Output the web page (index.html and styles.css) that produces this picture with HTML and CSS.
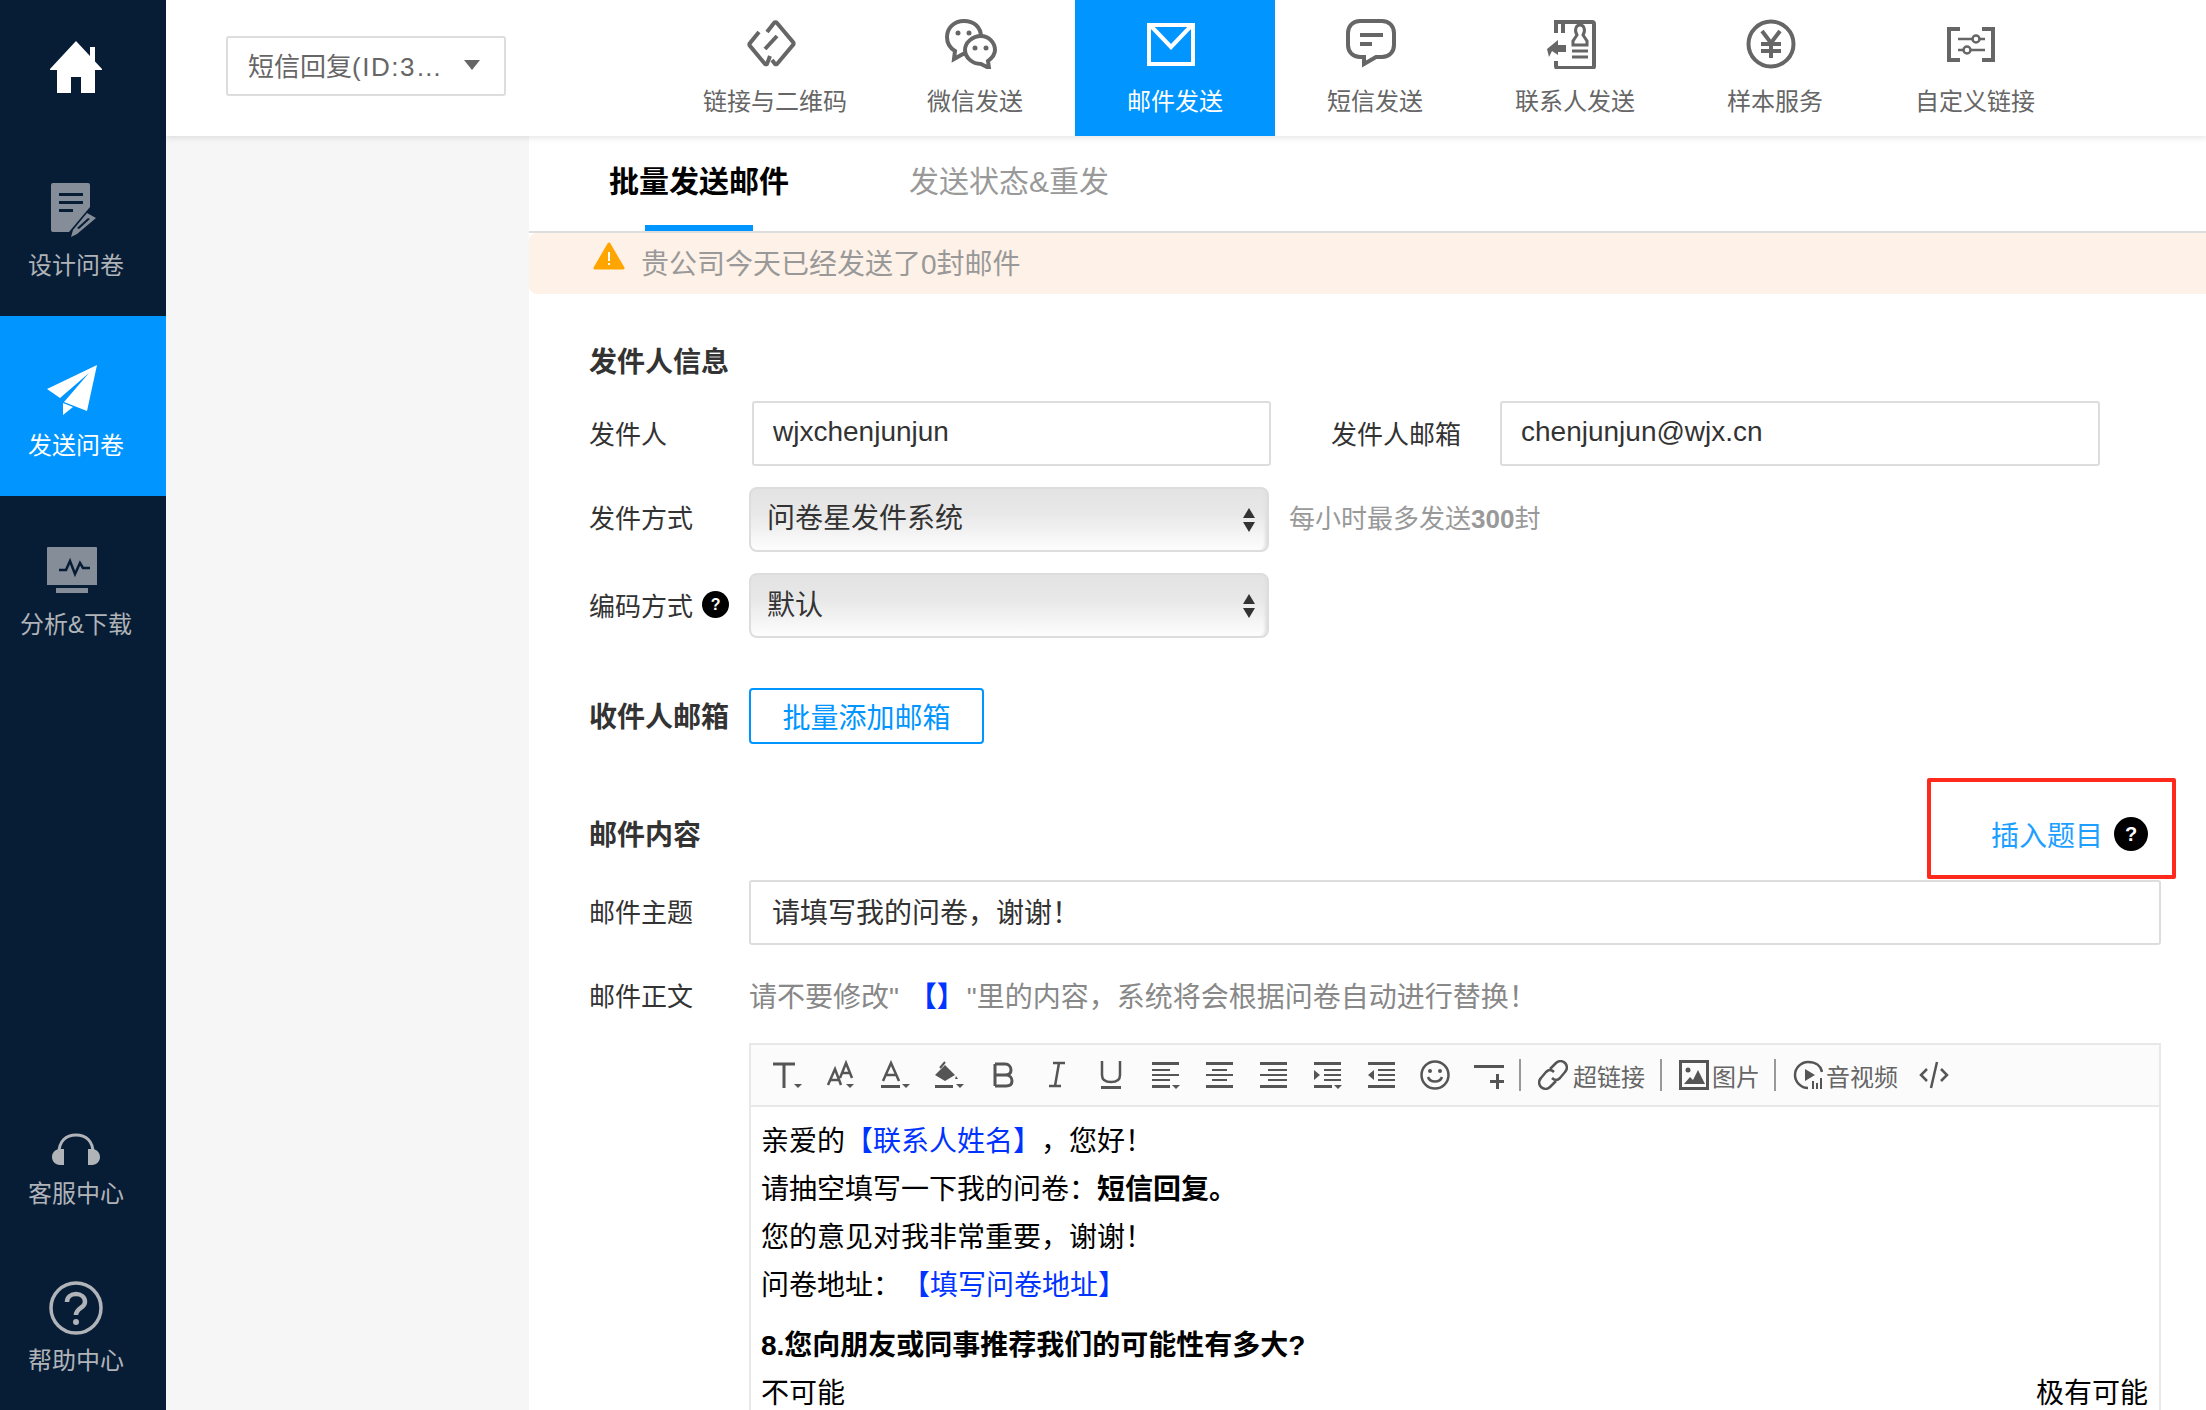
FILE: index.html
```html
<!DOCTYPE html>
<html lang="zh-CN">
<head>
    <meta charset="UTF-8">
    <title>邮件发送</title>
    <link rel="stylesheet" href="styles.css">
</head>
<body>
<div class="app">

    <aside class="sidebar">
        <div class="side-home">
            <svg width="52" height="52" viewBox="0 0 52 52"><path fill="#fff" d="M26 0 40 15V6h5v14.500L52 28v1H45V52H31V36H21V52H7V29H0v-1z"/></svg>
        </div>
        <div class="side-item side-design">
            <svg width="46" height="54" viewBox="0 0 46 54"><path fill="#858d98" d="M2 0H37a2 2 0 0 1 2 2V24L18 49H2a2 2 0 0 1-2-2V2a2 2 0 0 1 2-2z"/><path fill="#071d36" d="M8 10H32V13H8zM8 18H32V21H8zM8 26H22V29H8z"/><path fill="#858d98" d="M36 30 45 35 26 51 20 54 22 47z"/><path fill="#071d36" d="M37 35 39 36 28 46 26 45z"/></svg>
            <span>设计问卷</span>
        </div>
        <div class="side-item side-send">
            <svg width="50" height="50" viewBox="0 0 50 50"><path fill="#fff" d="M50 0 0 24 13 33 42 8 17 37 40 46zM16 38V50L26 42z"/></svg>
            <span>发送问卷</span>
        </div>
        <div class="side-item side-analysis">
            <svg width="50" height="46" viewBox="0 0 50 46"><path fill="#858d98" d="M1 0H49a1 1 0 0 1 1 1V38H0V1a1 1 0 0 1 1-1zM9 41H41V46H9z"/><path fill="none" stroke="#071d36" stroke-width="2.500" d="M12 23H19L23 14 28 27 33 16 36 21H43"/></svg>
            <span>分析&amp;下载</span>
        </div>
        <div class="side-fill"></div>
        <div class="side-item side-service">
            <svg width="48" height="33" viewBox="0 0 48 33"><path fill="none" stroke="#b0b3b8" stroke-width="3" d="M7 20C7 8 14 2 24 2S41 8 41 20"/><path fill="#b0b3b8" d="M12 16V32H8C3 32 0 28 0 24S3 16 8 16zM36 16V32H40C45 32 48 28 48 24S45 16 40 16z"/></svg>
            <span>客服中心</span>
        </div>
        <div class="side-item side-help">
            <svg width="54" height="54" viewBox="0 0 54 54"><circle cx="27" cy="27" r="25" fill="none" stroke="#b0b3b8" stroke-width="3.500"/><path fill="none" stroke="#b0b3b8" stroke-width="4.500" d="M18 21c0-5 4-8 9-8s9 3 9 8c0 6-9 6-9 13"/><circle cx="27" cy="41" r="3" fill="#b0b3b8"/></svg>
            <span>帮助中心</span>
        </div>
    </aside>

    <div class="main">
        <header class="topbar">
            <div class="survey-pick">
                <span>短信回复<span class="survey-id">(ID:3…</span></span>
                <i class="caret"></i>
            </div>
            <nav class="nav">
                <div class="nav-item">
                    <svg width="50" height="50" viewBox="0 0 50 50"><g fill="none" stroke="#666" stroke-width="4"><path d="M21 13 28 4a2 2 0 0 1 3 0L47 23a2 2 0 0 1 0 3L31 45a2 2 0 0 1-2 0L26 41"/><path d="M24 37 21 45a2 2 0 0 1-2 0L4 27a2 2 0 0 1 0-3L13 13"/><path d="M19 30 31 17"/></g></svg>
                    <span>链接与二维码</span>
                </div>
                <div class="nav-item">
                    <svg width="52" height="50" viewBox="0 0 52 50"><g fill="#fff" stroke="#666" stroke-width="4"><path d="M19 2C9 2 2 9 2 18c0 6 3 11 8 14l-1 8 9-5c8 0 18-7 18-17S29 2 19 2z"/><path d="M36 17C27 17 20 24 20 31s7 14 16 14l8 4-1-7c4-3 7-7 7-11 0-7-6-14-14-14z"/></g><g fill="#666"><circle cx="13" cy="14" r="2.500"/><circle cx="24" cy="14" r="2.500"/><circle cx="30" cy="29" r="2.500"/><circle cx="41" cy="29" r="2.500"/></g></svg>
                    <span>微信发送</span>
                </div>
                <div class="nav-item active">
                    <svg width="50" height="50" viewBox="0 0 50 50"><path fill="none" stroke="#fff" stroke-width="4" d="M3 6H47V45H3zM5 7 25 28 45 7"/></svg>
                    <span>邮件发送</span>
                </div>
                <div class="nav-item">
                    <svg width="50" height="50" viewBox="0 0 50 50"><path fill="none" stroke="#666" stroke-width="4" d="M14 2H36C43 2 48 7 48 14V26C48 33 43 38 36 38H30L18 45V38H14C7 38 2 33 2 26V14C2 7 7 2 14 2z"/><path fill="#666" d="M14 14H37V18H14zM14 23H26V27H14z"/></svg>
                    <span>短信发送</span>
                </div>
                <div class="nav-item">
                    <svg width="50" height="50" viewBox="0 0 50 50"><path fill="none" stroke="#666" stroke-width="4" d="M10 14V3H46a2 2 0 0 1 2 2V47a2 2 0 0 1-2 2H12a2 2 0 0 1-2-2V42"/><path fill="#666" d="M15 1H19V14H15zM1 30 12 21V26H20V33H12V36L6 32 3 38z"/><path fill="none" stroke="#666" stroke-width="3" d="M27 26V22L31 16C28 11 30 6 34 6S40 11 37 16L41 22V26zM26 32H42M26 38H42"/></svg>
                    <span>联系人发送</span>
                </div>
                <div class="nav-item">
                    <svg width="50" height="50" viewBox="0 0 50 50"><circle cx="25" cy="25" r="22.500" fill="none" stroke="#666" stroke-width="4"/><path fill="none" stroke="#666" stroke-width="4" d="M16 12 25 24 34 12M25 24V39M15 25H35M15 32H35"/></svg>
                    <span>样本服务</span>
                </div>
                <div class="nav-item">
                    <svg width="50" height="50" viewBox="0 0 50 50"><g fill="none" stroke="#666" stroke-width="4"><path d="M14 10H3V41H14M36 10H47V41H36"/></g><g fill="none" stroke="#666" stroke-width="2.500"><path d="M12 20H39M12 31H39"/><circle cx="30" cy="20" r="3.500" fill="#fff"/><circle cx="21" cy="31" r="3.500" fill="#fff"/></g></svg>
                    <span>自定义链接</span>
                </div>
            </nav>
        </header>

        <div class="content">
            <div class="gutter"></div>
            <section class="panel">
                <div class="tabs">
                    <div class="tab current">批量发送邮件</div>
                    <div class="tab">发送状态&amp;重发</div>
                </div>
                <div class="alert">
                    <svg width="32" height="28" viewBox="0 0 32 28"><path fill="#ffa500" stroke="#ffa500" stroke-width="3" stroke-linejoin="round" d="M16 2 30 26H2z"/><path fill="#fff" d="M15 10H17V19H15zM15 21H17V23H15z"/></svg>
                    <span>贵公司今天已经发送了0封邮件</span>
                </div>

                <form class="form">
                    <h3 class="sec-title first">发件人信息</h3>
                    <div class="row">
                        <label class="lbl">发件人</label>
                        <input class="field sender" type="text" value="wjxchenjunjun">
                        <label class="lbl lbl-mail">发件人邮箱</label>
                        <input class="field mail" type="text" value="chenjunjun@wjx.cn">
                    </div>
                    <div class="row">
                        <label class="lbl lbl-way">发件方式</label>
                        <div class="pick"><span class="way">问卷星发件系统</span></div>
                        <span class="hint">每小时最多发送<b>300</b>封</span>
                    </div>
                    <div class="row">
                        <label class="lbl">编码方式<i class="qmark small">?</i></label>
                        <div class="pick"><span class="up">默认</span></div>
                    </div>
                    <div class="row recv">
                        <label class="lbl strong">收件人邮箱</label>
                        <div class="btn-line">批量添加邮箱</div>
                    </div>
                    <div class="row-head">
                        <h3 class="sec-title">邮件内容</h3>
                        <div class="insert">
                            <a>插入题目</a><i class="qmark">?</i>
                            <div class="mark"></div>
                        </div>
                    </div>
                    <div class="row subject">
                        <label class="lbl">邮件主题</label>
                        <input class="field full" type="text" value="请填写我的问卷，谢谢！">
                    </div>
                    <div class="row body-tip">
                        <label class="lbl">邮件正文</label>
                        <span class="tip">请不要修改" <b>【】</b>"里的内容，系统将会根据问卷自动进行替换！</span>
                    </div>

                    <div class="editor">
                        <div class="toolbar">
                            <div class="tb-btn"><svg width="30" height="30" viewBox="0 0 30 30"><path fill="none" stroke="#555" stroke-width="3" d="M1 4H23M12 4V28"/><path fill="#555" d="M22 24H30L26 28z"/></svg></div>
                            <div class="tb-btn"><svg width="30" height="30" viewBox="0 0 30 30"><g fill="none" stroke="#555" stroke-width="2.500"><path d="M2 25 9 9 15 25M4 20H14M14 18 20 3 26 18M16 13H24"/></g><path fill="#555" d="M20 24H28L24 28z"/></svg></div>
                            <div class="tb-btn"><svg width="30" height="30" viewBox="0 0 30 30"><path fill="none" stroke="#555" stroke-width="2.500" d="M3 21 11 3 19 21M6 15H16"/><path fill="#555" d="M1 25H20V28H1zM22 24H30L26 28z"/></svg></div>
                            <div class="tb-btn"><svg width="30" height="30" viewBox="0 0 30 30"><path fill="#555" d="M11 5 21 15 11 21 1 15zM1 25H19V28H1zM22 24H30L26 28zM22 16l2 3h-3z"/><path fill="none" stroke="#555" stroke-width="2" d="M6 8 11 2"/></svg></div>
                            <div class="tb-btn"><svg width="30" height="30" viewBox="0 0 30 30"><path fill="none" stroke="#555" stroke-width="3" d="M7 4V26M7 4H17C21 4 23 7 23 10S21 15 17 15H7M17 15H18C22 15 24 18 24 21S22 26 18 26H7"/></svg></div>
                            <div class="tb-btn"><svg width="30" height="30" viewBox="0 0 30 30"><path fill="none" stroke="#555" stroke-width="2.500" d="M11 3H23M7 26H19M17 3 13 26"/></svg></div>
                            <div class="tb-btn"><svg width="30" height="30" viewBox="0 0 30 30"><path fill="none" stroke="#555" stroke-width="2.500" d="M6 1V15C6 20 10 22 15 22S24 20 24 15V1"/><path fill="#555" d="M5 26H25V29H5z"/></svg></div>
                            <div class="tb-btn"><svg width="30" height="30" viewBox="0 0 30 30"><path fill="#555" d="M2 2H29V5H2zM2 9H20V11H2zM2 14H29V16H2zM2 19H20V21H2zM2 25H20V28H2zM22 25H30L26 29z"/></svg></div>
                            <div class="tb-btn"><svg width="30" height="30" viewBox="0 0 30 30"><path fill="#555" d="M2 2H29V5H2zM8 9H23V11H8zM2 14H29V16H2zM8 19H23V21H8zM2 25H29V28H2z"/></svg></div>
                            <div class="tb-btn"><svg width="30" height="30" viewBox="0 0 30 30"><path fill="#555" d="M2 2H29V5H2zM10 9H29V11H10zM2 14H29V16H2zM10 19H29V21H10zM2 25H29V28H2z"/></svg></div>
                            <div class="tb-btn"><svg width="30" height="30" viewBox="0 0 30 30"><path fill="#555" d="M2 2H29V5H2zM12 9H29V11H12zM12 14H29V16H12zM12 19H29V21H12zM2 25H20V28H2zM2 10 8 15 2 20zM22 25H30L26 29z"/></svg></div>
                            <div class="tb-btn"><svg width="30" height="30" viewBox="0 0 30 30"><path fill="#555" d="M2 2H29V5H2zM12 9H29V11H12zM12 14H29V16H12zM12 19H29V21H12zM2 25H29V28H2zM8 10 2 15 8 20z"/></svg></div>
                            <div class="tb-btn"><svg width="30" height="30" viewBox="0 0 30 30"><circle cx="15" cy="15" r="13.500" fill="none" stroke="#555" stroke-width="2.500"/><circle cx="10" cy="11" r="2" fill="#555"/><circle cx="20" cy="11" r="2" fill="#555"/><path fill="none" stroke="#555" stroke-width="2.500" d="M8 17C10 23 20 23 22 17"/></svg></div>
                            <div class="tb-btn"><svg width="30" height="30" viewBox="0 0 30 30"><path fill="#555" d="M0 5H30V8H0zM22 14H25V20H31V23H25V29H22V23H16V20H22z"/></svg></div>
                            <i class="tb-sep"></i>
                            <div class="tb-text tb-link"><svg width="30" height="30" viewBox="0 0 30 30"><g fill="none" stroke="#555" stroke-width="2.500"><path d="M12 9 18 3C21 0 25 1 27 3S30 9 27 12L22 18C19 21 16 20 14 18"/><path d="M18 21 12 27C9 30 5 29 3 27S0 21 3 18L8 12C11 9 14 10 16 12"/></g></svg><span>超链接</span></div>
                            <i class="tb-sep"></i>
                            <div class="tb-text tb-image"><svg width="30" height="30" viewBox="0 0 30 30"><path fill="none" stroke="#555" stroke-width="3" d="M1.500 1.500H28.500V28.500H1.500z"/><circle cx="9" cy="10" r="2.500" fill="#555"/><path fill="#555" d="M5 24 11 17 14 20 19 10 26 24z"/></svg><span>图片</span></div>
                            <i class="tb-sep"></i>
                            <div class="tb-text"><svg width="30" height="30" viewBox="0 0 30 30"><path fill="none" stroke="#555" stroke-width="2.500" d="M29 12C28 6 23 2 15 2 8 2 2 8 2 15S8 28 15 28"/><path fill="#555" d="M12 9 22 15 12 21zM19 21H21V29H19zM23 23H25V29H23zM27 18H29V29H27z"/></svg><span>音视频</span></div>
                            <div class="tb-btn tb-code"><svg width="30" height="30" viewBox="0 0 30 30"><path fill="none" stroke="#555" stroke-width="2.500" d="M8 9 2 15 8 21M22 9 28 15 22 21M18 2 12 28"/></svg></div>
                        </div>
                        <div class="editor-body">
                            <p>亲爱的<em class="name">【联系人姓名】</em>，您好！</p>
                            <p>请抽空填写一下我的问卷：<b>短信回复。</b></p>
                            <p>您的意见对我非常重要，谢谢！</p>
                            <p>问卷地址：<em class="addr">【填写问卷地址】</em></p>
                            <p class="q-title">8.您向朋友或同事推荐我们的可能性有多大?</p>
                            <p class="scale"><span>不可能</span><span>极有可能</span></p>
                        </div>
                    </div>
                </form>
            </section>
        </div>
    </div>
</div>
</body>
</html>
```

FILE: styles.css
```css
* {
    box-sizing: border-box;
}
html, body {
    margin: 0;
    padding: 0;
    height: 1410px;
    overflow: hidden;
}
body {
    font-family: "Liberation Sans", "Noto Sans CJK SC", sans-serif;
    background: #fff;
    color: #333;
}
svg {
    display: block;
    flex: none;
}
.app {
    display: flex;
    height: 1410px;
}

/* left column */
.sidebar {
    width: 166px;
    flex: none;
    background: #071d36;
    display: flex;
    flex-direction: column;
    color: #b0b3b8;
    font-size: 24px;
}
.side-home {
    padding: 41px 14px 0 0;
    height: 183px;
    display: flex;
    justify-content: center;
}
.side-item {
    display: flex;
    flex-direction: column;
    align-items: center;
    padding-right: 14px;
    line-height: 34px;
}
.side-design {
    height: 133px;
}
.side-design svg {
    margin-left: -5px;
}
.side-design span {
    margin-top: 12px;
}
.side-send {
    height: 180px;
    padding-top: 49px;
    background: #0095ff;
    color: #fff;
}
.side-send svg,
.side-analysis svg {
    margin-left: -8px;
}
.side-send span {
    margin-top: 14px;
}
.side-analysis {
    padding-top: 51px;
}
.side-analysis span {
    margin-top: 15px;
}
.side-fill {
    flex: 1;
}
.side-service {
    padding-top: 1px;
}
.side-service span {
    margin-top: 11px;
}
.side-help {
    margin-top: 70px;
    padding-bottom: 32px;
}
.side-help span {
    margin-top: 9px;
}

/* top bar */
.main {
    flex: 1;
    min-width: 0;
    display: flex;
    flex-direction: column;
}
.topbar {
    height: 136px;
    flex: none;
    display: flex;
    align-items: flex-start;
    background: #fff;
    box-shadow: 0 2px 6px rgba(0, 0, 0, .1);
    position: relative;
    z-index: 2;
}
.survey-pick {
    width: 280px;
    height: 60px;
    margin: 36px 0 0 60px;
    padding: 0 24px 3px 20px;
    border: 2px solid #ddd;
    border-radius: 3px;
    display: flex;
    align-items: center;
    justify-content: space-between;
    font-size: 26px;
    color: #666;
}
.survey-id {
    letter-spacing: 1.500px;
}
.caret {
    width: 0;
    height: 0;
    border-left: 8px solid transparent;
    border-right: 8px solid transparent;
    border-top: 10px solid #666;
}
.nav {
    display: flex;
    margin-left: 169px;
}
.nav-item {
    width: 200px;
    height: 136px;
    padding-top: 19px;
    display: flex;
    flex-direction: column;
    align-items: center;
    font-size: 24px;
    color: #666;
}
.nav-item svg {
    margin-left: -8px;
}
.nav-item span {
    margin-top: 16px;
    line-height: 34px;
}
.nav-item.active {
    background: #0095ff;
    color: #fff;
}

/* content */
.content {
    flex: 1;
    display: flex;
    min-height: 0;
}
.gutter {
    width: 363px;
    flex: none;
    background: #f6f6f6;
}
.panel {
    flex: 1;
    min-width: 0;
}
.tabs {
    height: 97px;
    display: flex;
    border-bottom: 2px solid #ddd;
    padding-left: 80px;
}
.tab {
    font-size: 30px;
    color: #999;
    line-height: 92px;
    margin-right: 120px;
    position: relative;
}
.tab.current {
    color: #000;
    font-weight: bold;
}
.tab.current::after {
    content: "";
    position: absolute;
    left: 36px;
    width: 108px;
    bottom: 0;
    height: 6px;
    background: #0095ff;
}
.alert {
    height: 61px;
    background: #fef1e7;
    border-radius: 8px 0 0 8px;
    padding-left: 64px;
    display: flex;
    align-items: flex-start;
    font-size: 28px;
    color: #999;
}
.alert svg {
    margin-top: 9px;
}
.alert span {
    margin: 12px 0 0 16px;
    line-height: 40px;
}
.form {
    padding: 0 45px 0 60px;
}
.sec-title {
    margin: 0;
    font-size: 28px;
    line-height: 40px;
    color: #333;
}
.sec-title.first {
    margin: 49px 0 18px;
}
.row {
    display: flex;
    align-items: center;
    height: 65px;
    margin-bottom: 21px;
}
.lbl {
    width: 160px;
    flex: none;
    font-size: 26px;
    color: #333;
    display: flex;
    align-items: center;
    padding-bottom: 2px;
}
.lbl-way {
    padding-bottom: 6px;
}
.lbl.strong {
    font-weight: bold;
    font-size: 28px;
}
.lbl-mail {
    width: 169px;
    margin-left: 60px;
}
.field {
    height: 65px;
    border: 2px solid #ddd;
    border-radius: 3px;
    background: #fff;
    font: 28px "Liberation Sans", "Noto Sans CJK SC", sans-serif;
    color: #333;
    padding: 0 19px 3px;
    outline: none;
}
.sender {
    width: 519px;
    margin-left: 3px;
}
.mail {
    width: 600px;
    margin-left: 0;
}
.full {
    flex: 1;
    min-width: 0;
}
.pick {
    width: 520px;
    height: 65px;
    border: 2px solid #ddd;
    border-radius: 8px;
    background: linear-gradient(#e3e3e3, #e8e8e8 40%, #fdfdfd);
    box-shadow: inset -4px 0 3px -2px #e0e0e0;
    display: flex;
    align-items: center;
    padding-left: 16px;
    font-size: 28px;
    color: #333;
    position: relative;
}
.pick .way {
    margin-top: -7px;
}
.pick .up {
    margin-top: -5px;
}
.pick::before,
.pick::after {
    content: "";
    position: absolute;
    right: 12px;
    border-left: 6px solid transparent;
    border-right: 6px solid transparent;
}
.pick::before {
    top: 19px;
    border-bottom: 10px solid #333;
}
.pick::after {
    top: 33px;
    border-top: 10px solid #333;
}
.hint {
    margin: -6px 0 0 20px;
    font-size: 26px;
    color: #999;
}
.qmark {
    display: inline-flex;
    align-items: center;
    justify-content: center;
    width: 34px;
    height: 34px;
    border-radius: 50%;
    background: #000;
    color: #fff;
    font: bold 20px "Liberation Sans", sans-serif;
}
.qmark.small {
    width: 27px;
    height: 27px;
    font-size: 16px;
    margin-left: 9px;
}
.recv {
    height: 56px;
    margin: 50px 0 0;
}
.btn-line {
    width: 235px;
    height: 56px;
    border: 2px solid #0095ff;
    border-radius: 4px;
    color: #0095ff;
    font-size: 28px;
    display: flex;
    align-items: center;
    justify-content: center;
}
.row-head {
    display: flex;
    justify-content: space-between;
    align-items: center;
    height: 40px;
    margin: 72px 0 0;
}
.insert {
    display: flex;
    align-items: center;
    gap: 11px;
    margin: 0 13px 4px 0;
    font-size: 28px;
    color: #1e9fff;
    position: relative;
}
.mark {
    position: absolute;
    left: -64px;
    top: -36px;
    width: 249px;
    height: 101px;
    border: 4px solid #ff2a1c;
    border-radius: 2px;
}
.subject {
    margin: 24px 0 0;
}
.subject .field {
    padding: 0 21px 4px;
}
.subject .lbl {
    margin-top: -3px;
}
.body-tip {
    height: 40px;
    margin: 30px 0 28px;
}
.tip {
    font-size: 28px;
    color: #888;
}
.tip b {
    color: #0033ff;
    margin: 0 2px;
}
.editor {
    margin-left: 160px;
    border: 2px solid #e8e8e8;
    border-bottom: 0;
    height: 400px;
}
.toolbar {
    height: 62px;
    display: flex;
    align-items: center;
    padding-left: 9px;
    background: #fbfbfb;
    border-bottom: 2px solid #e8e8e8;
    color: #666;
    font-size: 24px;
}
.tb-btn {
    width: 54px;
    display: flex;
    justify-content: center;
}
.tb-sep {
    width: 2px;
    height: 32px;
    background: #999;
    margin: 0 17px 0 3px;
}
.tb-text {
    display: flex;
    align-items: center;
    gap: 3px;
    margin-right: 14px;
}
.tb-link {
    gap: 5px;
    margin-right: 12px;
}
.tb-image {
    margin-right: 11px;
}
.tb-code {
    margin-left: -5px;
}
.editor-body {
    padding: 11px 11px 0 10px;
    font-size: 28px;
    color: #000;
    line-height: 48px;
}
.editor-body p {
    margin: 0;
}
.editor-body em {
    font-style: normal;
    color: #0033ff;
}
.editor-body .name {
    margin-right: 14px;
}
.editor-body .addr {
    margin-left: 15px;
}
.editor-body .q-title {
    font-weight: bold;
    margin-top: 12px;
}
.scale {
    display: flex;
    justify-content: space-between;
}
```
